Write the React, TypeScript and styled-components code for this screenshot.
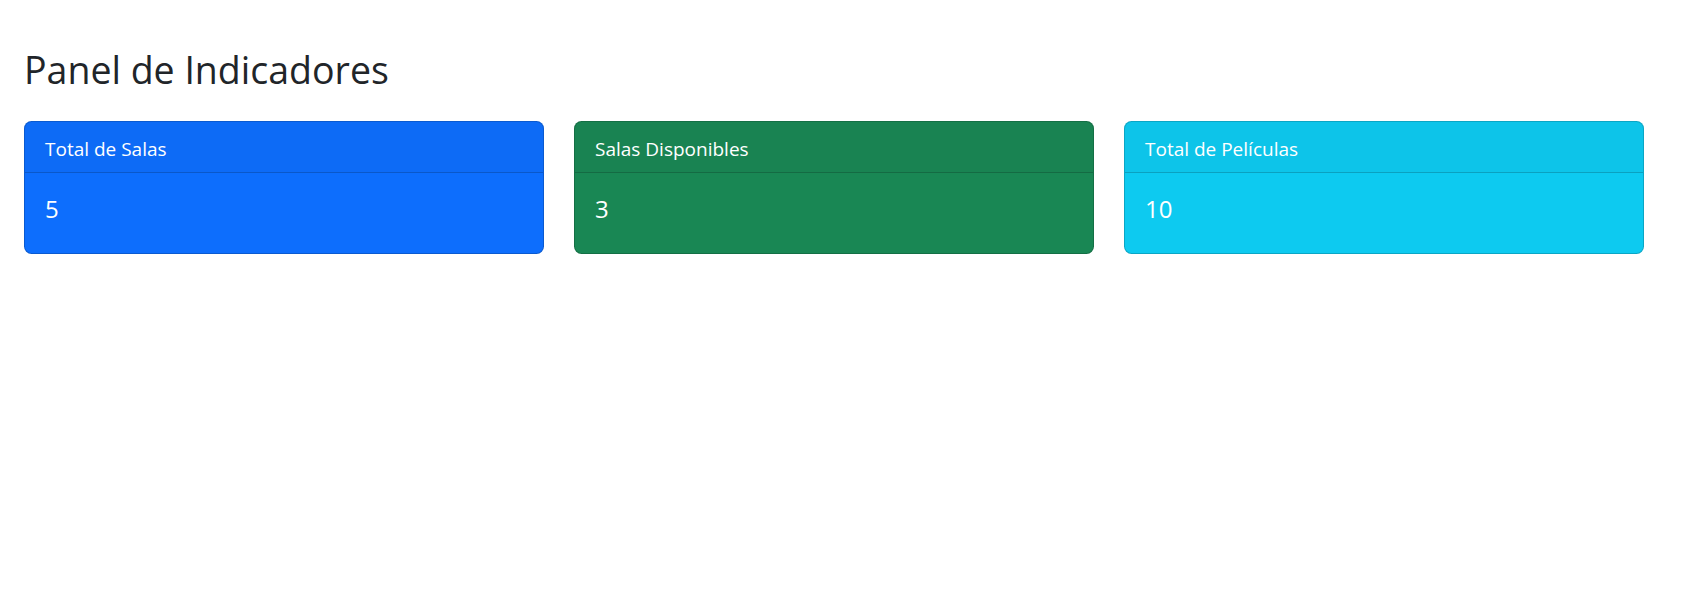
import React from "react";
import styled, { createGlobalStyle } from "styled-components";

const GlobalStyle = createGlobalStyle`
  html, body {
    margin: 0;
    padding: 0;
    background: #ffffff;
  }
  body {
    font-family: "Segoe UI", "Open Sans", "Noto Sans", sans-serif;
    font-size: 20px;
    line-height: 1.5;
    color: #212529;
  }
  *, *::before, *::after { box-sizing: border-box; }
`;

const Page = styled.main`
  padding: 46px 24px 0 24px;
`;

const Title = styled.h2`
  margin: 0 0 27px 0;
  font-size: 37.5px;
  line-height: 48px;
  font-weight: 400;
  color: #212529;
`;

const CardGrid = styled.div`
  display: grid;
  grid-template-columns: repeat(3, 520px);
  column-gap: 30px;
`;

const Card = styled.section<{ $bg: string }>`
  display: flex;
  flex-direction: column;
  background: ${(p) => p.$bg};
  color: #ffffff;
  border: 1px solid rgba(0, 0, 0, 0.175);
  border-radius: 7.5px;
  overflow: hidden;
`;

const CardHeader = styled.div`
  padding: 12px 20px 8px 20px;
  font-size: 19px;
  line-height: 30px;
  background: rgba(33, 37, 41, 0.03);
  border-bottom: 1px solid rgba(0, 0, 0, 0.175);
`;

const CardBody = styled.div`
  padding: 21px 20px 19px 20px;
`;

const CardValue = styled.h5`
  margin: 0 0 10px 0;
  font-size: 24px;
  line-height: 30px;
  font-weight: 400;
`;

const indicators = [
  { label: "Total de Salas", value: 5, bg: "#0d6efd" },
  { label: "Salas Disponibles", value: 3, bg: "#198754" },
  { label: "Total de Películas", value: 10, bg: "#0dcaf0" },
];

export default function App() {
  return (
    <>
      <GlobalStyle />
      <Page>
        <Title>Panel de Indicadores</Title>
        <CardGrid>
          {indicators.map((it) => (
            <Card key={it.label} $bg={it.bg}>
              <CardHeader>{it.label}</CardHeader>
              <CardBody>
                <CardValue>{it.value}</CardValue>
              </CardBody>
            </Card>
          ))}
        </CardGrid>
      </Page>
    </>
  );
}
